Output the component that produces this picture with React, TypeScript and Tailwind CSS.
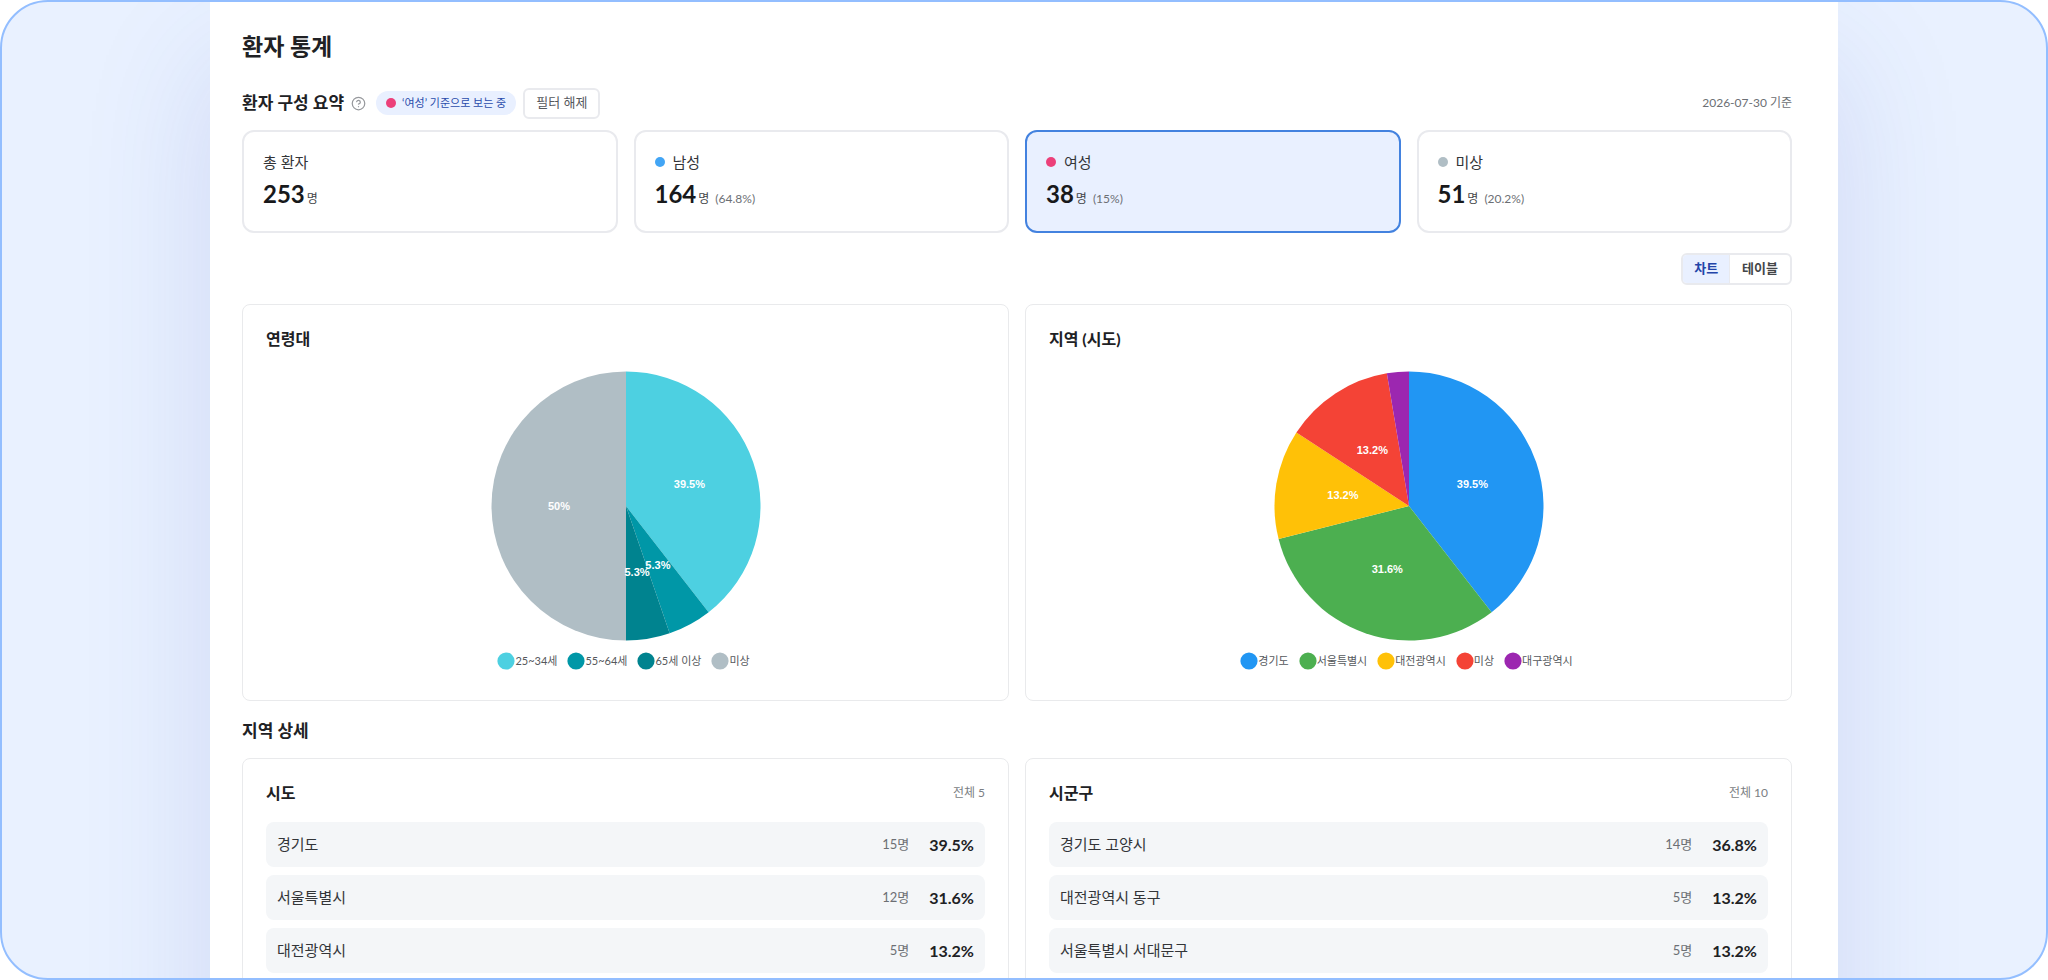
import { CircleHelp } from 'lucide-react';

const FONT = "font-[Lato,'Noto_Sans_CJK_KR',sans-serif]";

type Stat = { label: string; count: number; ratio?: string; dot?: string; active?: boolean };
type Slice = { name: string; value: number; label?: string; color: string };
type Region = { name: string; count: number; ratio: string };

const stats: Stat[] = [
  { label: '총 환자', count: 253 },
  { label: '남성', count: 164, ratio: '64.8%', dot: 'bg-[#42a5f5]' },
  { label: '여성', count: 38, ratio: '15%', dot: 'bg-[#ec407a]', active: true },
  { label: '미상', count: 51, ratio: '20.2%', dot: 'bg-[#b0bec5]' },
];

const ages: Slice[] = [
  { name: '25~34세', value: 15, label: '39.5%', color: '#4dd0e1' },
  { name: '55~64세', value: 2, label: '5.3%', color: '#0097a7' },
  { name: '65세 이상', value: 2, label: '5.3%', color: '#00838f' },
  { name: '미상', value: 19, label: '50%', color: '#b0bec5' },
];

const provinces: Slice[] = [
  { name: '경기도', value: 15, label: '39.5%', color: '#2196f3' },
  { name: '서울특별시', value: 12, label: '31.6%', color: '#4caf50' },
  { name: '대전광역시', value: 5, label: '13.2%', color: '#ffc107' },
  { name: '미상', value: 5, label: '13.2%', color: '#f44336' },
  { name: '대구광역시', value: 1, color: '#9c27b0' },
];

const sido: Region[] = [
  { name: '경기도', count: 15, ratio: '39.5%' },
  { name: '서울특별시', count: 12, ratio: '31.6%' },
  { name: '대전광역시', count: 5, ratio: '13.2%' },
];

const sigungu: Region[] = [
  { name: '경기도 고양시', count: 14, ratio: '36.8%' },
  { name: '대전광역시 동구', count: 5, ratio: '13.2%' },
  { name: '서울특별시 서대문구', count: 5, ratio: '13.2%' },
];

function point(turn: number, r: number) {
  const a = turn * Math.PI * 2;
  return [135 + Math.sin(a) * r, 135 - Math.cos(a) * r];
}

function Pie({ slices }: { slices: Slice[] }) {
  const total = slices.reduce((sum, s) => sum + s.value, 0);
  let acc = 0;
  const arcs = slices.map((s) => {
    const start = acc / total;
    acc += s.value;
    return { ...s, start, end: acc / total };
  });

  return (
    <svg viewBox="0 0 270 270" className="size-[270px]" role="img">
      {arcs.map((s) => {
        const [x1, y1] = point(s.start, 134.5);
        const [x2, y2] = point(s.end, 134.5);
        const large = s.end - s.start > 0.5 ? 1 : 0;
        return (
          <path key={s.name} d={`M135 135L${x1} ${y1}A134.5 134.5 0 ${large} 1 ${x2} ${y2}Z`} fill={s.color} />
        );
      })}
      {arcs.map((s) => {
        const [x, y] = point((s.start + s.end) / 2, 67);
        return s.label ? (
          <text
            key={s.name}
            x={x}
            y={y + 4}
            textAnchor="middle"
            className="fill-white font-['Liberation_Sans',sans-serif] text-[11px] font-bold"
          >
            {s.label}
          </text>
        ) : null;
      })}
    </svg>
  );
}

function StatCard({ stat }: { stat: Stat }) {
  return (
    <button
      type="button"
      aria-pressed={!!stat.active}
      className={`flex h-[103px] flex-col items-start rounded-xl border-2 px-[19px] pt-[18px] text-left ${
        stat.active ? 'border-[#4382df] bg-[#e9f0ff]' : 'border-[#e9eaee] bg-white'
      }`}
    >
      <span className="flex items-center gap-2 text-[15px] leading-6 text-[#333538]">
        {stat.dot && <span className={`size-[10px] rounded-full ${stat.dot}`} />}
        {stat.label}
      </span>
      <span className="mt-1 flex items-baseline leading-8">
        <strong className="text-2xl leading-8 font-bold text-[#18191b]">{stat.count}</strong>
        <span className="ml-[2px] text-xs text-[#444649]">명</span>
        {stat.ratio && <span className="ml-[6px] text-xs text-[#6c6f74]">({stat.ratio})</span>}
      </span>
    </button>
  );
}

function ChartCard({ title, slices }: { title: string; slices: Slice[] }) {
  return (
    <section className="flex flex-col rounded-lg border border-[#e9eaec] px-[23px] pt-[22px] pb-[29px]">
      <h3 className="text-base leading-6 font-bold text-[#202124]">{title}</h3>
      <div className="mt-5 flex flex-col items-center">
        <Pie slices={slices} />
        <ul className="mt-[10px] mr-1 flex flex-wrap justify-center gap-[10px]">
          {slices.map((s) => (
            <li key={s.name} className="flex items-center text-[11px] leading-5 text-[#55585c]">
              <svg viewBox="0 0 18 18" className="size-[18px]" aria-hidden="true">
                <circle cx="9" cy="9" r="8.6" fill={s.color} />
              </svg>
              {s.name}
            </li>
          ))}
        </ul>
      </div>
    </section>
  );
}

function RegionCard({ title, total, rows }: { title: string; total: number; rows: Region[] }) {
  return (
    <section className="rounded-lg border border-[#e9eaec] px-[23px] pt-[22px] pb-6">
      <header className="flex items-center justify-between">
        <h3 className="text-base leading-6 font-bold text-[#202124]">{title}</h3>
        <span className="text-xs text-[#7b7e83]">전체 {total}</span>
      </header>
      <ul className="mt-[17px] flex flex-col gap-2">
        {rows.map((row) => (
          <li key={row.name} className="flex h-[45px] items-center rounded-lg bg-[#f4f6f8] px-[11px]">
            <span className="flex-1 text-[15px] text-[#333538]">{row.name}</span>
            <span className="text-[13px] text-[#6c6f74]">{row.count}명</span>
            <strong className="ml-5 text-base font-bold text-[#202124]">{row.ratio}</strong>
          </li>
        ))}
      </ul>
    </section>
  );
}

export default function PatientStatistics() {
  return (
    <div className={`h-screen overflow-hidden rounded-[48px] border-2 border-[#93beff] bg-[#e9f1ff] ${FONT}`}>
      <main className="mx-auto max-w-[1628px] bg-white pt-7 pr-[46px] pb-40 pl-8 shadow-[0_60px_120px_rgba(60,80,190,0.15)]">
        <h1 className="text-[23px] leading-8 font-bold text-[#202124]">환자 통계</h1>

        <div className="mt-[25px] flex h-8 items-center">
          <h2 className="text-[17px] leading-6 font-bold text-[#202124]">환자 구성 요약</h2>
          <button type="button" aria-label="도움말" className="ml-[7px] text-[#97999d]">
            <CircleHelp size={15} strokeWidth={2} />
          </button>
          <span className="ml-[10px] flex h-6 items-center gap-[6px] rounded-full bg-[#e9f0ff] px-[10px] text-[11px] text-[#2a4cab]">
            <span className="size-[10px] rounded-full bg-[#ec407a]" />
            ‘여성’ 기준으로 보는 중
          </span>
          <button
            type="button"
            className="ml-[7px] h-[31px] rounded-md border-2 border-[#e9eaee] px-[11px] text-[13px] text-[#55585c]"
          >
            필터 해제
          </button>
          <time className="ml-auto text-xs text-[#6c6f74]">2026-07-30 기준</time>
        </div>

        <div className="mt-[11px] grid grid-cols-4 gap-4">
          {stats.map((stat) => (
            <StatCard key={stat.label} stat={stat} />
          ))}
        </div>

        <div className="mt-5 flex justify-end">
          <div className="flex h-8 overflow-hidden rounded-md border-2 border-[#e9eaee] text-[13px] font-bold">
            <button type="button" aria-pressed="true" className="border-r border-[#e9eaee] bg-[#e9f0ff] px-[11px] text-[#2344a8]">
              차트
            </button>
            <button type="button" aria-pressed="false" className="px-3 text-[#444649]">
              테이블
            </button>
          </div>
        </div>

        <div className="mt-[19px] grid grid-cols-2 gap-4">
          <ChartCard title="연령대" slices={ages} />
          <ChartCard title="지역 (시도)" slices={provinces} />
        </div>

        <h2 className="mt-[18px] text-[17px] leading-6 font-bold text-[#202124]">지역 상세</h2>

        <div className="mt-[15px] grid grid-cols-2 gap-4">
          <RegionCard title="시도" total={5} rows={sido} />
          <RegionCard title="시군구" total={10} rows={sigungu} />
        </div>
      </main>
    </div>
  );
}
